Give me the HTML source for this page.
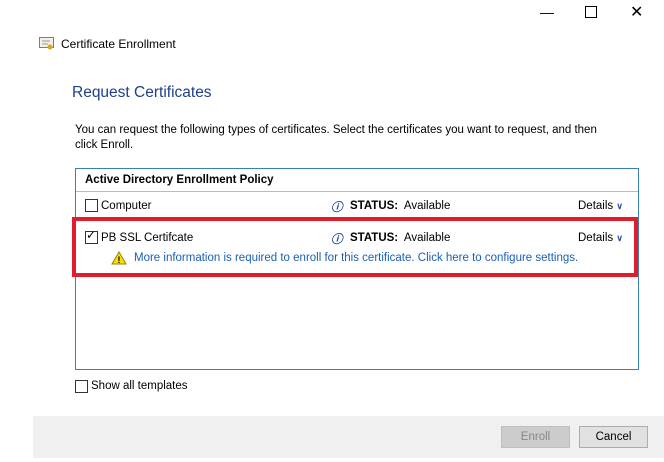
<!DOCTYPE html>
<html><head><style>
body{margin:0;width:664px;height:462px;background:#fff;font-family:"Liberation Sans",sans-serif;font-size:11.5px;color:#000;position:relative;overflow:hidden}
.a{position:absolute;white-space:nowrap}
.cb{position:absolute;width:11px;height:11px;border:1px solid #333;background:#fff}
.blue{color:#1a5fb4}
.chev{color:#1c4f9c;font-size:9px;font-weight:bold}
</style></head><body>
<div class="a" style="left:540px;top:4px;font-size:14px">&#8212;</div>
<div class="a" style="left:585px;top:6px;width:10px;height:10px;border:1px solid #000"></div>
<div class="a" style="left:630px;top:2px;font-size:16px;font-weight:300">&#10005;</div>
<svg class="a" style="left:39px;top:37px" width="16" height="14"><rect x="0.5" y="0.5" width="14" height="10" fill="#f4f0e6" stroke="#8a7a60"/><line x1="3" y1="4" x2="11" y2="4" stroke="#999"/><line x1="3" y1="7" x2="9" y2="7" stroke="#999"/><circle cx="11" cy="10" r="2.5" fill="#e0a020"/></svg>
<div class="a" style="left:61px;top:37px;font-size:12px">Certificate Enrollment</div>
<div class="a" style="left:72px;top:84px;font-size:15.5px;color:#1e3f8a">Request Certificates</div>
<div class="a" style="left:75px;top:123px;line-height:15px">You can request the following types of certificates. Select the certificates you want to request, and then<br>click Enroll.</div>
<div class="a" style="left:75px;top:168px;width:562px;height:200px;border:1px solid #3c7fb1"></div>
<div class="a" style="left:76px;top:191px;width:562px;height:1px;background:#bbb"></div>
<div class="a" style="left:85px;top:174px;font-weight:bold">Active Directory Enrollment Policy</div>
<div class="cb" style="left:85px;top:199px"></div>
<div class="a" style="left:101px;top:200px">Computer</div>
<div class="a" style="left:331px;top:199px;font-style:italic;font-weight:bold;color:#1c4f9c">&#9432;</div>
<div class="a" style="left:350px;top:200px"><b>STATUS:</b>&nbsp; Available</div>
<div class="a" style="left:578px;top:200px">Details <span class="chev">&#8744;</span></div>
<div class="a" style="left:72px;top:217px;width:558px;height:52px;border:4px solid #e21c2a"></div>
<div class="cb" style="left:85px;top:231px"></div>
<div class="a" style="left:86px;top:228px;font-size:12px">&#10003;</div>
<div class="a" style="left:101px;top:232px">PB SSL Certifcate</div>
<div class="a" style="left:331px;top:231px;font-style:italic;font-weight:bold;color:#1c4f9c">&#9432;</div>
<div class="a" style="left:350px;top:232px"><b>STATUS:</b>&nbsp; Available</div>
<div class="a" style="left:578px;top:232px">Details <span class="chev">&#8744;</span></div>
<svg class="a" style="left:111px;top:251px" width="16" height="14"><polygon points="8,1 15,13 1,13" fill="#f5e000" stroke="#a08000"/><text x="8" y="12" font-size="9" text-anchor="middle" font-weight="bold" font-family="Liberation Sans">!</text></svg>
<div class="a blue" style="left:134px;top:252px">More information is required to enroll for this certificate. Click here to configure settings.</div>
<div class="cb" style="left:75px;top:380px"></div>
<div class="a" style="left:91px;top:380px">Show all templates</div>
<div class="a" style="left:33px;top:416px;width:631px;height:42px;background:#f0f0f0"></div>
<div class="a" style="left:501px;top:426px;width:67px;height:20px;background:#ccc;border:1px solid #bfbfbf;color:#888;text-align:center;line-height:20px">Enroll</div>
<div class="a" style="left:579px;top:426px;width:67px;height:20px;background:#e1e1e1;border:1px solid #adadad;text-align:center;line-height:20px">Cancel</div>
</body></html>
